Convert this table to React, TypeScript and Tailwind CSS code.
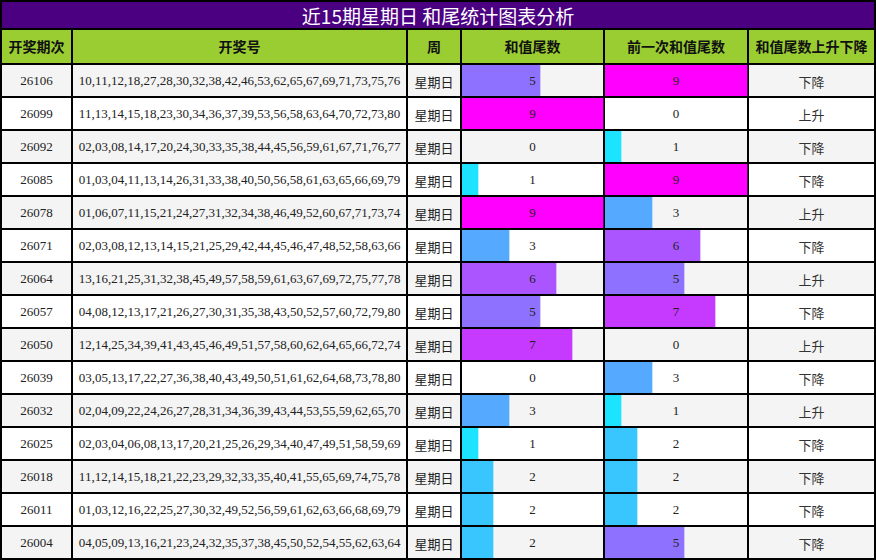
const ROWS: [string, string, number, number, string][] = [
  ["26106", "10,11,12,18,27,28,30,32,38,42,46,53,62,65,67,69,71,73,75,76", 5, 9, "下降"],
  ["26099", "11,13,14,15,18,23,30,34,36,37,39,53,56,58,63,64,70,72,73,80", 9, 0, "上升"],
  ["26092", "02,03,08,14,17,20,24,30,33,35,38,44,45,56,59,61,67,71,76,77", 0, 1, "下降"],
  ["26085", "01,03,04,11,13,14,26,31,33,38,40,50,56,58,61,63,65,66,69,79", 1, 9, "下降"],
  ["26078", "01,06,07,11,15,21,24,27,31,32,34,38,46,49,52,60,67,71,73,74", 9, 3, "上升"],
  ["26071", "02,03,08,12,13,14,15,21,25,29,42,44,45,46,47,48,52,58,63,66", 3, 6, "下降"],
  ["26064", "13,16,21,25,31,32,38,45,49,57,58,59,61,63,67,69,72,75,77,78", 6, 5, "上升"],
  ["26057", "04,08,12,13,17,21,26,27,30,31,35,38,43,50,52,57,60,72,79,80", 5, 7, "下降"],
  ["26050", "12,14,25,34,39,41,43,45,46,49,51,57,58,60,62,64,65,66,72,74", 7, 0, "上升"],
  ["26039", "03,05,13,17,22,27,36,38,40,43,49,50,51,61,62,64,68,73,78,80", 0, 3, "下降"],
  ["26032", "02,04,09,22,24,26,27,28,31,34,36,39,43,44,53,55,59,62,65,70", 3, 1, "上升"],
  ["26025", "02,03,04,06,08,13,17,20,21,25,26,29,34,40,47,49,51,58,59,69", 1, 2, "下降"],
  ["26018", "11,12,14,15,18,21,22,23,29,32,33,35,40,41,55,65,69,74,75,78", 2, 2, "下降"],
  ["26011", "01,03,12,16,22,25,27,30,32,49,52,56,59,61,62,63,66,68,69,79", 2, 2, "下降"],
  ["26004", "04,05,09,13,16,21,23,24,32,35,37,38,45,50,52,54,55,62,63,64", 2, 5, "下降"],
];

// cyan -> magenta by tail value
const barRgb = (v: number) => {
  const r = Math.round((255 * v) / 9);
  return `${r},${255 - r},255`;
};

const BarCell = ({ value }: { value: number }) => {
  const rgb = barRgb(value);
  return (
    <td className="border border-black p-0">
      <div className="relative h-[31px] flex items-center justify-center">
        {value > 0 && (
          <div
            className="absolute left-0 top-0 bottom-0"
            style={{
              width: `${(value / 9) * 100}%`,
              backgroundColor: `rgb(${rgb})`,
              boxShadow: `1px 0 0 rgba(${rgb},0.35)`,
            }}
          />
        )}
        <span className="relative text-[13px] text-[#222]">{value}</span>
      </div>
    </td>
  );
};

export default function App() {
  return (
    <div className="w-[876px] h-[560px] bg-white font-['Liberation_Serif','Noto_Sans_CJK_SC',serif]">
      <table className="w-[876px] table-fixed border-separate border-spacing-0 border border-black">
        <colgroup>
          <col className="w-[71px]" />
          <col className="w-[335px]" />
          <col className="w-[54px]" />
          <col className="w-[143px]" />
          <col className="w-[144px]" />
          <col className="w-[127px]" />
        </colgroup>
        <thead>
          <tr>
            <th
              colSpan={6}
              className="h-[28px] p-0 border border-black bg-[#4b0082] text-white text-[19px] font-normal leading-none font-['Noto_Sans_CJK_SC',sans-serif]"
            >
              近15期星期日 和尾统计图表分析
            </th>
          </tr>
          <tr className="bg-[#9acd32] text-[14px] font-bold text-[#111] font-['Noto_Sans_CJK_SC',sans-serif]">
            {["开奖期次", "开奖号", "周", "和值尾数", "前一次和值尾数", "和值尾数上升下降"].map((h) => (
              <th key={h} className="h-[35px] p-0 border border-black whitespace-nowrap">
                {h}
              </th>
            ))}
          </tr>
        </thead>
        <tbody>
          {ROWS.map(([period, nums, cur, prev, trend], idx) => (
            <tr key={period} className={idx % 2 === 0 ? "bg-[#f4f4f4]" : "bg-white"}>
              <td className="h-[33px] p-0 border border-black text-center text-[13px] text-[#222]">{period}</td>
              <td className="p-0 border border-black text-center text-[13px] text-[#222] whitespace-nowrap">{nums}</td>
              <td className="p-0 pt-[3px] border border-black text-center text-[13px] text-[#222] font-['Noto_Sans_CJK_SC',sans-serif]">
                星期日
              </td>
              <BarCell value={cur} />
              <BarCell value={prev} />
              <td className="p-0 pt-[3px] border border-black text-center text-[13px] text-[#333] font-['Noto_Sans_CJK_SC',sans-serif]">
                {trend}
              </td>
            </tr>
          ))}
        </tbody>
      </table>
    </div>
  );
}
